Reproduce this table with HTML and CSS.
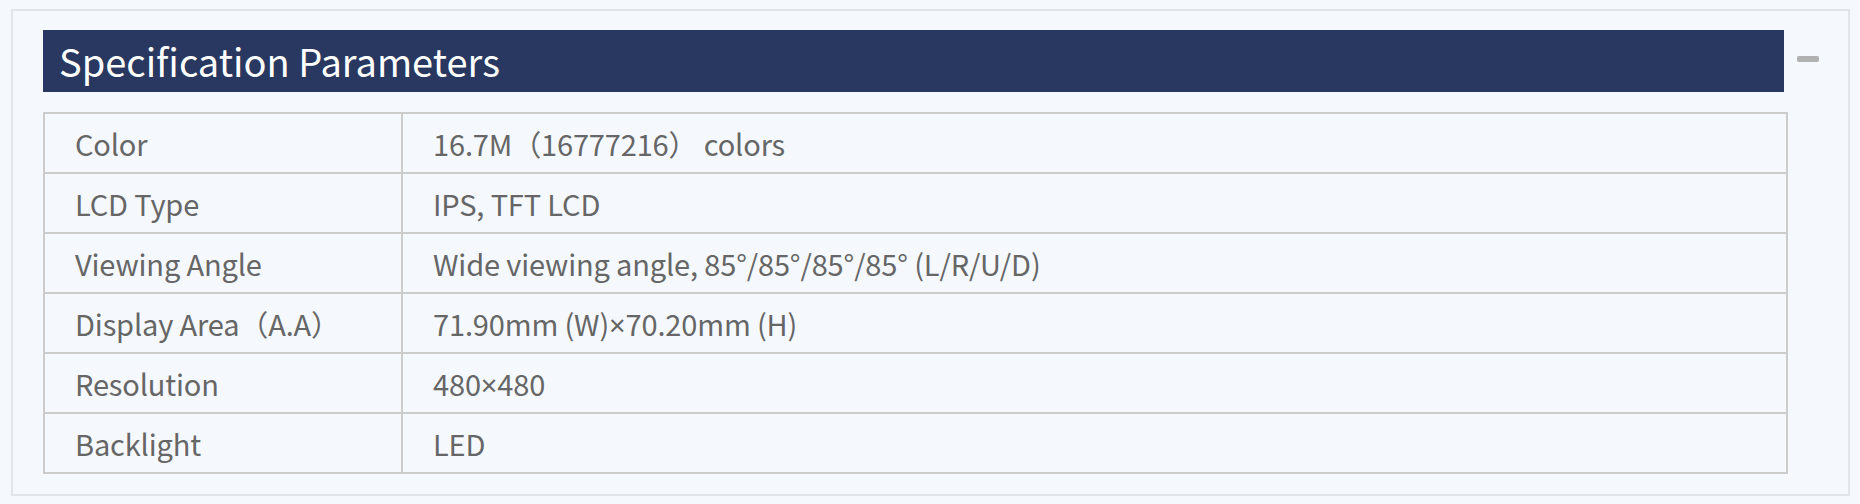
FILE: index.html
```html
<!DOCTYPE html>
<html lang="en">
<head>
<meta charset="utf-8">
<title>Specification Parameters</title>
<link rel="stylesheet" href="styles.css">
</head>
<body>
<section class="panel">
  <div class="main">
    <h2 class="title">Specification Parameters</h2>
    <table class="spec">
      <tbody>
        <tr><td class="k">Color</td><td class="v">16.7M（16777216） colors</td></tr>
        <tr><td class="k">LCD Type</td><td class="v">IPS, TFT LCD</td></tr>
        <tr><td class="k">Viewing Angle</td><td class="v">Wide viewing angle, 85°/85°/85°/85° (L/R/U/D)</td></tr>
        <tr><td class="k">Display Area（A.A）</td><td class="v">71.90mm (W)<span class="times">×</span>70.20mm (H)</td></tr>
        <tr><td class="k">Resolution</td><td class="v">480<span class="times">×</span>480</td></tr>
        <tr><td class="k">Backlight</td><td class="v">LED</td></tr>
      </tbody>
    </table>
  </div>
  <div class="side">
    <span class="minus"></span>
  </div>
</section>
</body>
</html>
```
FILE: styles.css
```css
html, body {
  margin: 0;
  padding: 0;
  background: #f5f9fe;
}
body {
  padding: 9px 10px 8px 11px;
  font-family: "Noto Sans CJK SC", "Noto Sans", sans-serif;
}
.panel {
  display: flex;
  border: 2px solid #e2e5e8;
  padding: 19px 0 20px 30px;
}
.main {
  width: 1745px;
  flex: none;
}
.title {
  margin: 0 4px 20px 0;
  height: 62px;
  box-sizing: border-box;
  padding-left: 16px;
  background: #283860;
  color: #ffffff;
  font-weight: 400;
  font-size: 38px;
  line-height: 62px;
  white-space: nowrap;
}
.spec {
  width: 1745px;
  border-collapse: separate;
  border-spacing: 0;
  border-top: 2px solid #cccccc;
  border-left: 2px solid #cccccc;
  table-layout: fixed;
}
.spec td {
  height: 58px;
  padding: 0 0 0 30px;
  border-right: 2px solid #cccccc;
  border-bottom: 2px solid #cccccc;
  color: #666666;
  font-size: 29px;
  letter-spacing: -0.15px;
  line-height: 58px;
  white-space: nowrap;
  box-sizing: content-box;
}
.spec td.k {
  width: 326px;
}
.times {
  font-family: "Noto Sans", "DejaVu Sans", sans-serif;
  line-height: 1;
}
.side {
  flex: 1;
  padding: 26px 0 0 9px;
}
.minus {
  display: block;
  width: 22px;
  height: 6px;
  border-radius: 2px;
  background: #b1b1b1;
}
```
